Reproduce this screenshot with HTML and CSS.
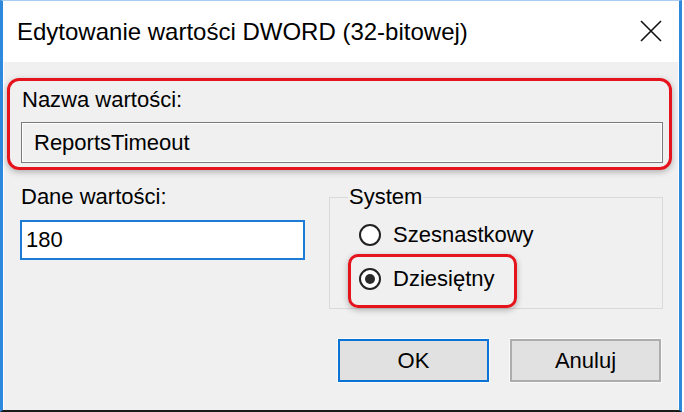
FILE: index.html
```html
<!DOCTYPE html>
<html>

<head>
    <meta charset="UTF-8">
    <meta name="viewport" content="width=device-width, initial-scale=1.0">
    <title>Edytowanie wartości DWORD</title>
    <link rel="stylesheet" href="styles.css">
</head>

<body>
    <div class="dialog">
        <!-- Title bar -->
        <div class="titlebar">
            <span class="title">Edytowanie wartości DWORD (32-bitowej)</span>
            <svg class="close" width="22" height="22" viewBox="0 0 22 22">
                <path d="M1 1 L21 21 M21 1 L1 21" stroke="#111" stroke-width="1.6" fill="none" />
            </svg>
        </div>

        <div class="content">
            <div class="highlight name-box">
                <div class="label">Nazwa wartości:</div>
                <input class="field field-disabled" type="text" value="ReportsTimeout" readonly>
            </div>

            <div class="row">
                <div class="data-col">
                    <div class="label">Dane wartości:</div>
                    <input class="field field-active" type="text" value="180">
                </div>

                <fieldset class="group">
                    <legend>System</legend>
                    <div class="radio-row first">
                        <span class="radio"></span>
                        <span>Szesnastkowy</span>
                    </div>
                    <div class="highlight radio-box">
                        <div class="radio-row">
                            <span class="radio checked"></span>
                            <span>Dziesiętny</span>
                        </div>
                    </div>
                </fieldset>
            </div>

            <div class="buttons">
                <button class="btn btn-default">OK</button>
                <button class="btn">Anuluj</button>
            </div>
        </div>
    </div>
</body>

</html>
```

FILE: styles.css
```css
/* Basic reset */
* {
    margin: 0;
    padding: 0;
    box-sizing: border-box;
}

html,
body {
    width: 684px;
    height: 412px;
    background-color: #fff;
    overflow: hidden;
    font-family: "Liberation Sans", Arial, sans-serif;
    color: #000;
}

.dialog {
    width: 682px;
    height: 412px;
    display: flex;
    flex-direction: column;
    background-color: #fff;
    border-top: 1px solid #a9cdf0;
    border-left: 3px solid #2e88dc;
    border-right: 3px solid #2e88dc;
    border-bottom: 2px solid #1a1a1a;
    padding: 0 1px;
}

.titlebar {
    height: 61px;
    display: flex;
    align-items: center;
    justify-content: space-between;
    padding: 0 16px 0 13px;
    background-color: #fff;
}

.title {
    font-size: 24px;
    line-height: 28px;
}

.close {
    display: block;
    margin-top: -1px;
}

.content {
    flex: 1;
    background-color: #f0f0f0;
    padding: 0 15px 0 16px;
}

.label {
    font-size: 22px;
    line-height: 24px;
    padding-left: 1px;
}

/* Red annotation frames */
.highlight {
    border: 3px solid #e5131c;
    border-radius: 12px;
    box-shadow: 0 2px 6px rgba(0, 0, 0, 0.28);
}

.name-box {
    margin: 16px -9px 0 -13px;
    padding: 7px 6px 4px 11px;
}

.field {
    display: block;
    width: 100%;
    font-family: inherit;
    font-size: 22px;
    line-height: 24px;
    color: #000;
    outline: none;
}

.field-disabled {
    height: 41px;
    margin-top: 10px;
    padding: 0 12px;
    background-color: #f0f0f0;
    border: 1px solid #7a7a7a;
    box-shadow: inset 0 0 0 1px #fdfdfd;
}

.row {
    display: flex;
    gap: 24px;
    margin-top: 15px;
}

.data-col {
    width: 285px;
}

.field-active {
    height: 40px;
    margin-top: 11px;
    padding: 0 4px;
    background-color: #fff;
    border: 2px solid #1c7bd6;
}

.group {
    flex: 1;
    border: 1px solid #d9d9d9;
    padding: 14px 0 0 18px;
    font-size: 22px;
}

.group legend {
    padding: 0 1px;
    line-height: 24px;
}

.radio-row {
    display: flex;
    align-items: center;
    gap: 12px;
    height: 24px;
    font-size: 22px;
    line-height: 24px;
}

.radio-row.first {
    margin-left: 11px;
}

.radio {
    width: 22px;
    height: 22px;
    border: 2px solid #222;
    border-radius: 50%;
    background-color: #fff;
    display: flex;
    align-items: center;
    justify-content: center;
}

.radio.checked::after {
    content: "";
    width: 10px;
    height: 10px;
    border-radius: 50%;
    background-color: #2a2a2a;
}

.radio-box {
    display: inline-block;
    margin-top: 7px;
    padding: 10px 20px 14px 8px;
    border-radius: 10px;
}

.buttons {
    display: flex;
    justify-content: flex-end;
    gap: 21px;
    margin-top: 30px;
    padding-right: 2px;
}

.btn {
    width: 151px;
    height: 43px;
    font-family: inherit;
    font-size: 22px;
    color: #000;
    background-color: #e1e1e1;
    border: 2px solid #adadad;
    box-shadow: 0 0 0 1px #fafafa;
}

.btn-default {
    border-color: #0a74d6;
}
```
